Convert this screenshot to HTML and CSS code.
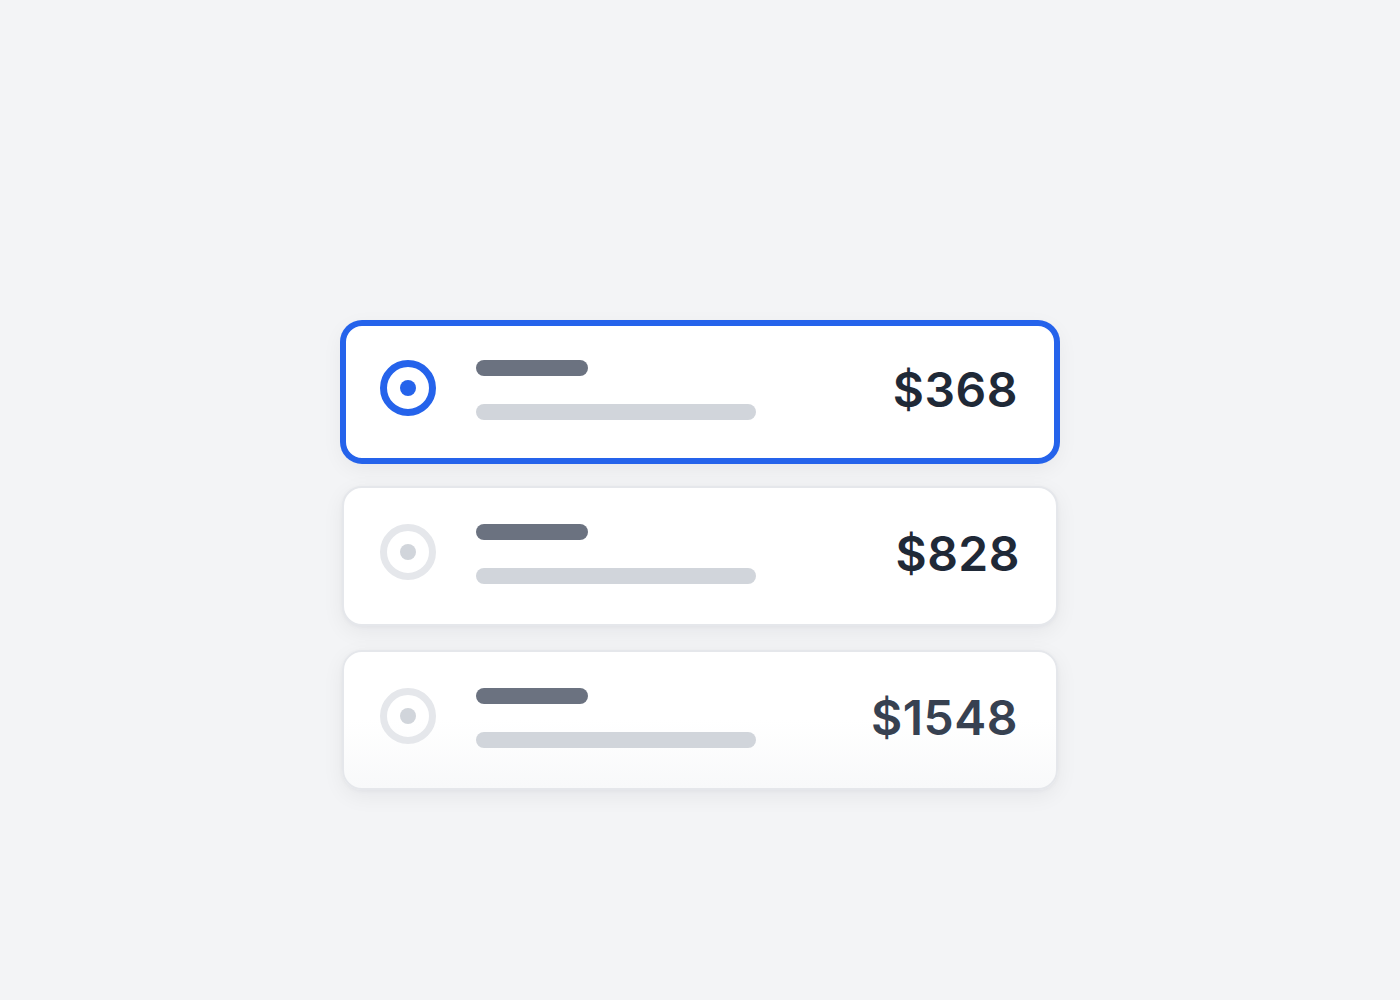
FILE: index.html
```html
<!DOCTYPE html>
<html lang="en">
<head>
<meta charset="utf-8">
<title>Plan options</title>
<link rel="stylesheet" href="styles.css">
</head>
<body>
<main class="page">
  <div class="options">
    <div class="option option--selected">
      <span class="radio radio--on"><span class="radio-dot"></span></span>
      <div class="bars">
        <span class="bar bar--title"></span>
        <span class="bar bar--sub"></span>
      </div>
      <span class="price">$368</span>
    </div>
    <div class="option">
      <span class="radio"><span class="radio-dot"></span></span>
      <div class="bars">
        <span class="bar bar--title"></span>
        <span class="bar bar--sub"></span>
      </div>
      <span class="price price--shift">$828</span>
    </div>
    <div class="option option--fade">
      <span class="radio"><span class="radio-dot"></span></span>
      <div class="bars">
        <span class="bar bar--title"></span>
        <span class="bar bar--sub"></span>
      </div>
      <span class="price price--soft">$1548</span>
    </div>
  </div>
</main>
</body>
</html>
```

FILE: styles.css
```css
* { box-sizing: border-box; }
html, body { margin: 0; padding: 0; }
body {
  background: #f3f4f6;
  font-family: Inter, "Noto Sans", "Liberation Sans", sans-serif;
  min-height: 1000px;
}
.page {
  display: flex;
  justify-content: center;
  padding-top: 322px;
}
.options {
  width: 716px;
  display: flex;
  flex-direction: column;
  gap: 24px;
}
.option {
  height: 140px;
  background: #ffffff;
  border: 2px solid #e5e7eb;
  border-radius: 20px;
  padding: 36px 40px 36px 36px;
  display: flex;
  align-items: flex-start;
  gap: 40px;
  box-shadow: 0 6px 22px rgba(17, 24, 39, 0.06), 0 1px 4px rgba(17, 24, 39, 0.04);
}
.option--selected {
  border: 4px solid #2563eb;
  padding: 34px 38px 34px 34px;
  box-shadow: 0 0 0 2px #2563eb, 0 6px 22px rgba(17, 24, 39, 0.06);
}
.option--fade {
  background: linear-gradient(to bottom, #ffffff 0%, #ffffff 50%, #f8f9fa 100%);
}
.radio {
  width: 56px;
  height: 56px;
  flex: 0 0 56px;
  border-radius: 50%;
  border: 7px solid #e5e7eb;
  display: flex;
  align-items: center;
  justify-content: center;
}
.radio-dot {
  width: 16px;
  height: 16px;
  border-radius: 50%;
  background: #d1d5db;
}
.radio--on { border-color: #2563eb; }
.radio--on .radio-dot { background: #2563eb; }
.bars {
  display: flex;
  flex-direction: column;
  gap: 28px;
  flex: 1;
}
.bar {
  display: block;
  height: 16px;
  border-radius: 8px;
}
.bar--title { width: 112px; background: #6b7280; }
.bar--sub { width: 280px; background: #d1d5db; }
.price {
  font-size: 48px;
  line-height: 60px;
  font-weight: 600;
  color: #1f2937;
  letter-spacing: 0.5px;
  margin-right: -2px;
}
.price--shift { margin-right: -4px; }
.price--soft { color: #374151; }
```
